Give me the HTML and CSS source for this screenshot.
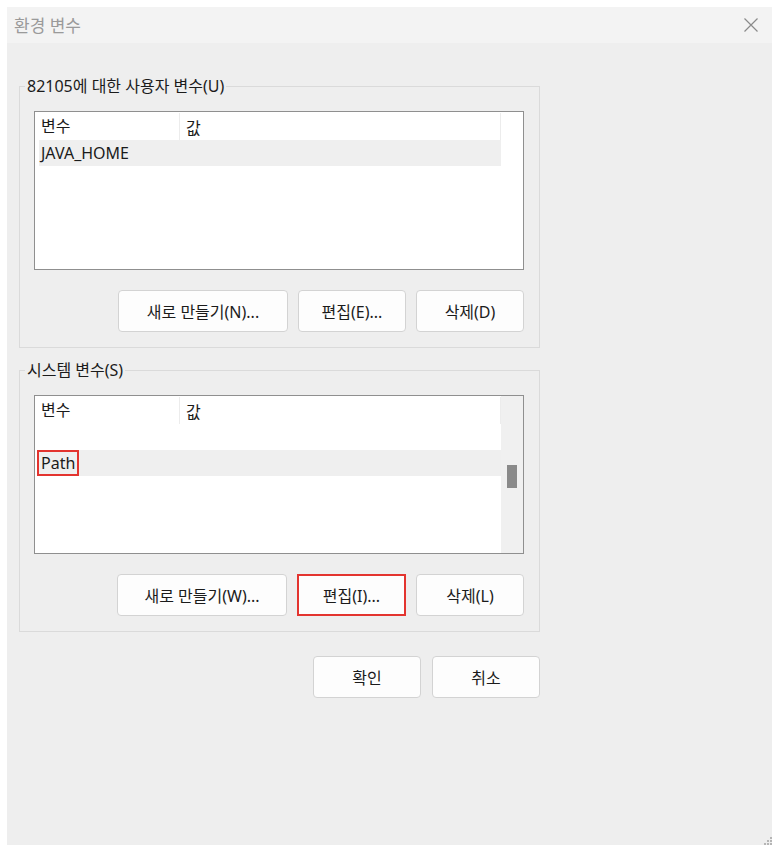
FILE: index.html
```html
<!DOCTYPE html>
<html lang="ko">
  <head>
    <meta charset="UTF-8" />
    <title>환경 변수</title>
    <link rel="stylesheet" href="styles.css">
  </head>

  <body>
    <div class="window">
      <div class="titlebar">
        <span class="title">환경 변수</span>
        <svg class="close" width="16" height="16" viewBox="0 0 16 16">
          <path d="M1.5 1.5L14.5 14.5M14.5 1.5L1.5 14.5" stroke="#8a8a8a" stroke-width="1.2" fill="none" />
        </svg>
      </div>

      <div class="content">
        <!-- 사용자 변수 -->
        <fieldset class="group">
          <legend>82105에 대한 사용자 변수(U)</legend>
          <div class="list">
            <div class="rows">
              <div class="row head">
                <span class="col name">변수</span>
                <span class="col value">값</span>
              </div>
              <div class="row selected">
                <span class="col name">JAVA_HOME</span>
                <span class="col value"></span>
              </div>
            </div>
            <div class="gutter"></div>
          </div>
          <div class="buttons">
            <button class="btn wide">새로 만들기(N)...</button>
            <button class="btn">편집(E)...</button>
            <button class="btn">삭제(D)</button>
          </div>
        </fieldset>

        <!-- 시스템 변수 -->
        <fieldset class="group second">
          <legend>시스템 변수(S)</legend>
          <div class="list">
            <div class="rows">
              <div class="row head">
                <span class="col name">변수</span>
                <span class="col value">값</span>
              </div>
              <div class="row"></div>
              <div class="row selected">
                <span class="col name"><span class="mark">Path</span></span>
                <span class="col value"></span>
              </div>
            </div>
            <div class="gutter scroll">
              <div class="thumb"></div>
            </div>
          </div>
          <div class="buttons">
            <button class="btn wide">새로 만들기(W)...</button>
            <button class="btn marked">편집(I)...</button>
            <button class="btn">삭제(L)</button>
          </div>
        </fieldset>

        <div class="footer">
          <button class="btn">확인</button>
          <button class="btn">취소</button>
        </div>
      </div>

      <svg class="grip" width="8" height="8" viewBox="0 0 8 8">
        <rect x="6" y="0" width="2" height="2" fill="#b5b5b5" />
        <rect x="3" y="3" width="2" height="2" fill="#b5b5b5" />
        <rect x="6" y="3" width="2" height="2" fill="#b5b5b5" />
        <rect x="0" y="6" width="2" height="2" fill="#b5b5b5" />
        <rect x="3" y="6" width="2" height="2" fill="#b5b5b5" />
        <rect x="6" y="6" width="2" height="2" fill="#b5b5b5" />
      </svg>
    </div>
  </body>
</html>
```

FILE: styles.css
```css
body {
  margin: 0;
  background: #fff;
  font-family: "Noto Sans", "Noto Sans CJK KR", sans-serif;
  font-size: 16px;
  color: #1b1b1b;
}

.window {
  position: relative;
  margin: 7px 0 0 7px;
  width: 765px;
  height: 838px;
  background: #eeeeee;
}

.titlebar {
  height: 36px;
  background: #f3f3f3;
  display: flex;
  align-items: center;
  justify-content: space-between;
  padding: 0 13px 0 7px;
  box-sizing: border-box;
}

.title {
  color: #9a9a9a;
  font-size: 17px;
  margin-top: -1px;
}

.content {
  padding: 33px 0 0 12px;
}

.group {
  margin: 0;
  width: 521px;
  box-sizing: border-box;
  padding: 15px 15px 15px 14px;
  border: 1px solid #dadada;
  min-width: 0;
}

.group.second {
  margin-top: 12px;
}

.group legend {
  padding: 0 2px;
  margin-left: -9px;
  line-height: 20px;
}

.list {
  width: 490px;
  height: 159px;
  box-sizing: border-box;
  border: 1px solid #8f8f8f;
  background: #fff;
  display: flex;
  padding: 1px 0 1px 4px;
}

.rows {
  flex: 1;
}

.row {
  display: flex;
  height: 26px;
  align-items: center;
}

.row.head {
  height: 27px;
  border-right: 1px solid #ececec;
}

.row.selected {
  background: #efefef;
}

.col {
  box-sizing: border-box;
  padding-left: 2px;
}

.col.name {
  width: 141px;
}

.head .col.name {
  border-right: 1px solid #ececec;
  height: 27px;
  line-height: 27px;
}

.head .col.value {
  padding-left: 6px;
}

.mark {
  display: inline-block;
  margin-left: -4px;
  padding: 0 2px;
  border: 2px solid #e3342f;
  line-height: 22px;
}

.gutter {
  width: 22px;
}

.gutter.scroll {
  background: #f0f0f0;
  margin: -1px 0 -1px 0;
  display: flex;
  justify-content: center;
}

.thumb {
  width: 10px;
  height: 23px;
  margin-top: 69px;
  background: #8a8a8a;
}

.buttons,
.footer {
  display: flex;
  justify-content: flex-end;
  gap: 10px;
}

.buttons {
  margin-top: 20px;
}

.footer {
  width: 521px;
  margin-top: 24px;
  gap: 11px;
}

.btn {
  width: 108px;
  height: 42px;
  font: inherit;
  color: #1b1b1b;
  background: #fdfdfd;
  border: 1px solid #d3d3d3;
  border-radius: 4px;
}

.btn.wide {
  width: 170px;
}

.btn.marked {
  width: 109px;
  border: 2px solid #e3342f;
  border-radius: 0;
}

.close {
  display: block;
}

.grip {
  position: absolute;
  right: 0;
  bottom: 0;
}
```
